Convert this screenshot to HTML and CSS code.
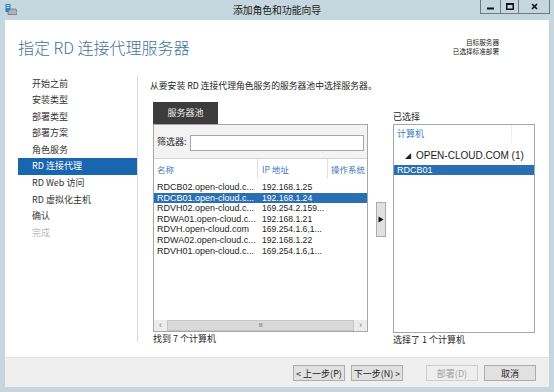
FILE: index.html
```html
<!DOCTYPE html>
<html lang="zh-CN">
<head>
    <meta charset="UTF-8">
    <meta name="viewport" content="width=device-width, initial-scale=1.0">
    <link rel="stylesheet" href="styles.css">
</head>
<body>
<div class="window">
    <!-- Titulní lišta -->
    <div class="titlebar">
        <svg class="app-icon" width="12" height="11" viewBox="0 0 12 11">
            <rect x="0.5" y="0" width="5" height="8" fill="#2f7fc8"/>
            <rect x="1.5" y="1" width="3" height="1" fill="#bfe0ff"/>
            <rect x="1.5" y="3" width="3" height="1" fill="#bfe0ff"/>
            <path d="M4 6.5 L6 5 L11 5 L12 8 L12 10.5 L3 10.5 L3 8 Z" fill="#a9b3ba" stroke="#6f7b84" stroke-width="0.8"/>
        </svg>
        <div class="title">添加角色和功能向导</div>
        <div class="controls">
            <span class="ctl-min"><svg width="7" height="7" viewBox="0 0 7 7"><rect x="0" y="4.5" width="7" height="2" fill="#111"/></svg></span>
            <span class="ctl-max"><svg width="8" height="7" viewBox="0 0 8 7"><rect x="0.75" y="0.75" width="6.5" height="5.5" fill="none" stroke="#111" stroke-width="1.5"/><rect x="0" y="0" width="8" height="2" fill="#111"/></svg></span>
            <span class="ctl-close"><svg width="7" height="7" viewBox="0 0 7 7"><path d="M1 1 L6 6 M6 1 L1 6" stroke="#111" stroke-width="1.7"/></svg></span>
        </div>
    </div>

    <div class="client">
        <!-- Hlavička průvodce -->
        <div class="header">
            <h1>指定 RD 连接代理服务器</h1>
            <div class="meta">目标服务器<br>已选择标准部署</div>
        </div>

        <div class="main">
            <!-- Kroky průvodce -->
            <ul class="steps">
                <li>开始之前</li>
                <li>安装类型</li>
                <li>部署类型</li>
                <li>部署方案</li>
                <li>角色服务</li>
                <li class="active">RD 连接代理</li>
                <li>RD Web 访问</li>
                <li>RD 虚拟化主机</li>
                <li>确认</li>
                <li class="disabled">完成</li>
            </ul>

            <div class="content">
                <p class="intro">从要安装 RD 连接代理角色服务的服务器池中选择服务器。</p>

                <div class="picker">
                    <!-- Seznam serverů -->
                    <div class="pool">
                        <div class="tab">服务器池</div>
                        <div class="pool-box">
                            <div class="filter">
                                <span>筛选器:</span>
                                <div class="filter-input"></div>
                            </div>
                            <div class="thead">
                                <div class="col-name">名称</div>
                                <div class="col-ip">IP 地址</div>
                                <div class="col-os">操作系统</div>
                            </div>
                            <div class="rows">
                                <div class="row"><div class="col-name">RDCB02.open-cloud.c...</div><div class="col-ip">192.168.1.25</div></div>
                                <div class="row selected"><div class="col-name">RDCB01.open-cloud.c...</div><div class="col-ip">192.168.1.24</div></div>
                                <div class="row"><div class="col-name">RDVH02.open-cloud.c...</div><div class="col-ip">169.254.2.159...</div></div>
                                <div class="row"><div class="col-name">RDWA01.open-cloud.c...</div><div class="col-ip">192.168.1.21</div></div>
                                <div class="row"><div class="col-name">RDVH.open-cloud.com</div><div class="col-ip">169.254.1.6,1...</div></div>
                                <div class="row"><div class="col-name">RDWA02.open-cloud.c...</div><div class="col-ip">192.168.1.22</div></div>
                                <div class="row"><div class="col-name">RDVH01.open-cloud.c...</div><div class="col-ip">169.254.1.6,1...</div></div>
                            </div>
                            <div class="hscroll">
                                <span class="arrow">&lsaquo;</span>
                                <span class="thumb">III</span>
                                <span class="arrow">&rsaquo;</span>
                            </div>
                        </div>
                        <div class="count">找到 7 个计算机</div>
                    </div>

                    <div class="mover">
                        <div class="move-btn"><svg width="6" height="7" viewBox="0 0 6 7"><path d="M0.5 0.5 L5.5 3.5 L0.5 6.5 Z" fill="#111"/></svg></div>
                    </div>

                    <!-- Vybrané servery -->
                    <div class="chosen">
                        <div class="chosen-label">已选择</div>
                        <div class="chosen-box">
                            <div class="chosen-head"><span>计算机</span><span></span></div>
                            <div class="group"><span class="caret">&#9698;</span>OPEN-CLOUD.COM (1)</div>
                            <div class="chosen-row">RDCB01</div>
                        </div>
                        <div class="count">选择了 1 个计算机</div>
                    </div>
                </div>
            </div>
        </div>

        <!-- Tlačítka -->
        <div class="footer">
            <button class="btn">&lt; 上一步(P)</button>
            <button class="btn">下一步(N) &gt;</button>
            <button class="btn btn-gap" disabled>部署(D)</button>
            <button class="btn">取消</button>
        </div>
    </div>
</div>
</body>
</html>
```

FILE: styles.css
```css
* {
    box-sizing: border-box;
}

body {
    margin: 0;
    background-color: #c5d6df;
    font-family: "Noto Sans CJK SC", sans-serif;
    font-size: 9px;
    color: #1e1e1e;
}

.window {
    width: 554px;
    height: 392px;
    display: flex;
    flex-direction: column;
}

/* Titulní lišta */
.titlebar {
    height: 20px;
    display: grid;
    grid-template-columns: 1fr auto 1fr;
    align-items: start;
}

.app-icon {
    margin: 4px 0 0 5px;
}

.title {
    font-size: 9.8px;
    line-height: 20px;
    color: #1a1a1a;
}

.controls {
    justify-self: end;
    margin-right: 4px;
    display: flex;
    height: 14px;
    border: 1px solid #6c7a83;
    border-top: 0;
}

.controls span {
    display: flex;
    align-items: center;
    justify-content: center;
}

.ctl-min {
    width: 19px;
}

.ctl-max {
    width: 18px;
    border-left: 1px solid #6c7a83;
}

.ctl-close {
    width: 31px;
    border-left: 1px solid #6c7a83;
}

/* Klientská oblast */
.client {
    flex: 1;
    margin: 0 5px 5px;
    background-color: #fff;
    display: flex;
    flex-direction: column;
}

.header {
    height: 50px;
    display: flex;
    justify-content: space-between;
    padding: 17px 50px 0 13px;
}

.header h1 {
    margin: 0;
    font-size: 16px;
    font-weight: 300;
    line-height: 20px;
    color: #3f7399;
}

.meta {
    font-size: 6.6px;
    line-height: 9px;
    text-align: right;
    margin-top: 1px;
    color: #222;
}

.main {
    flex: 1;
    display: flex;
}

/* Kroky */
.steps {
    list-style: none;
    margin: 5px 0 15px;
    padding: 0.7px 0 0 13px;
    width: 133px;
    border-right: 1px solid #dadada;
}

.steps li {
    height: 16.56px;
    line-height: 16.56px;
    padding-left: 14px;
    color: #333;
}

.steps li.active {
    background-color: #1866b0;
    color: #fff;
}

.steps li.disabled {
    color: #b9b9b9;
}

.content {
    flex: 1;
    padding: 10px 14px 0 12px;
}

.intro {
    margin: 0 0 10px;
    font-size: 8.8px;
    line-height: 12px;
}

.picker {
    display: flex;
    margin-left: 3px;
}

/* Fond serverů */
.pool {
    width: 215px;
}

.tab {
    width: 65px;
    height: 22px;
    line-height: 22px;
    text-align: center;
    background-color: #3c3c3c;
    color: #eee;
}

.pool-box {
    height: 208px;
    border: 1px solid #a7a7a7;
    display: flex;
    flex-direction: column;
}

.filter {
    height: 34px;
    background-color: #f3f3f3;
    border-bottom: 1px solid #d2d2d2;
    display: flex;
    align-items: center;
    padding: 0 3px;
    gap: 3px;
}

.filter-input {
    flex: 1;
    height: 16px;
    margin-top: 2px;
    background-color: #fff;
    border: 1px solid #a6a6a6;
}

.thead {
    height: 20px;
    line-height: 20px;
    display: flex;
    font-size: 8.5px;
    color: #3b7bbf;
}

.col-name {
    width: 104px;
    padding-left: 3px;
    white-space: nowrap;
}

.col-ip {
    width: 70px;
    padding-left: 4px;
    white-space: nowrap;
}

.col-os {
    flex: 1;
    padding-left: 3px;
    white-space: nowrap;
}

.thead .col-name,
.thead .col-ip {
    border-right: 1px solid #e2e2e2;
}

.rows {
    flex: 1;
    padding-top: 3px;
}

.row {
    display: flex;
    height: 10.6px;
    line-height: 10.6px;
    font-family: "Liberation Sans", sans-serif;
    font-size: 9px;
}

.row .col-ip {
    font-size: 8.6px;
}

.row.selected {
    background-color: #2b6fb3;
    color: #fff;
}

.hscroll {
    height: 11px;
    display: flex;
    background-color: #ececec;
    color: #777;
    font-family: "Liberation Sans", sans-serif;
    font-size: 9px;
    line-height: 10px;
}

.hscroll .arrow {
    width: 13px;
    text-align: center;
}

.hscroll .thumb {
    flex: 1;
    background-color: #dadada;
    border: 1px solid #c6c6c6;
    text-align: center;
    font-size: 6px;
    line-height: 9px;
    letter-spacing: -0.5px;
}

.count {
    margin-top: 1px;
    line-height: 11px;
}

.mover {
    width: 25px;
    padding-top: 100px;
    display: flex;
    justify-content: center;
    align-items: flex-start;
}

.move-btn {
    width: 10px;
    height: 35px;
    background-color: #e1e1e1;
    border: 1px solid #acacac;
    display: flex;
    align-items: center;
    justify-content: center;
}

/* Vybrané */
.chosen {
    width: 142px;
}

.chosen-label {
    height: 22px;
    padding-top: 9px;
    line-height: 12px;
}

.chosen-box {
    height: 209px;
    border: 1px solid #a7a7a7;
}

.chosen-head {
    height: 18px;
    line-height: 18px;
    display: flex;
    color: #3b7bbf;
}

.chosen-head span:first-child {
    width: 118px;
    padding-left: 3px;
    border-right: 1px solid #eeeeee;
}

.group {
    margin-top: 5px;
    height: 15px;
    line-height: 15px;
    padding-left: 11px;
    font-family: "Liberation Sans", sans-serif;
    font-size: 10px;
    color: #1a1a1a;
}

.caret {
    font-size: 6px;
    margin-right: 5px;
    vertical-align: 1px;
}

.chosen-row {
    margin-top: 2px;
    height: 10px;
    line-height: 10px;
    padding-left: 3px;
    font-family: "Liberation Sans", sans-serif;
    font-size: 9px;
    background-color: #2b6fb3;
    color: #fff;
}

/* Patička */
.footer {
    height: 30px;
    background-color: #efefef;
    border-top: 1px solid #e2e2e2;
    display: flex;
    justify-content: flex-end;
    align-items: flex-start;
    padding: 7px 13px 0 0;
}

.btn {
    width: 52px;
    height: 16px;
    margin-left: 6px;
    padding: 0;
    font-family: inherit;
    font-size: 9px;
    color: #1e1e1e;
    background-color: #e1e1e1;
    border: 1px solid #adadad;
    border-radius: 0;
}

.btn-gap {
    margin-left: 23px;
}

.btn:disabled {
    color: #a3a3a3;
    background-color: #eeeeee;
    border-color: #cdcdcd;
}
```
